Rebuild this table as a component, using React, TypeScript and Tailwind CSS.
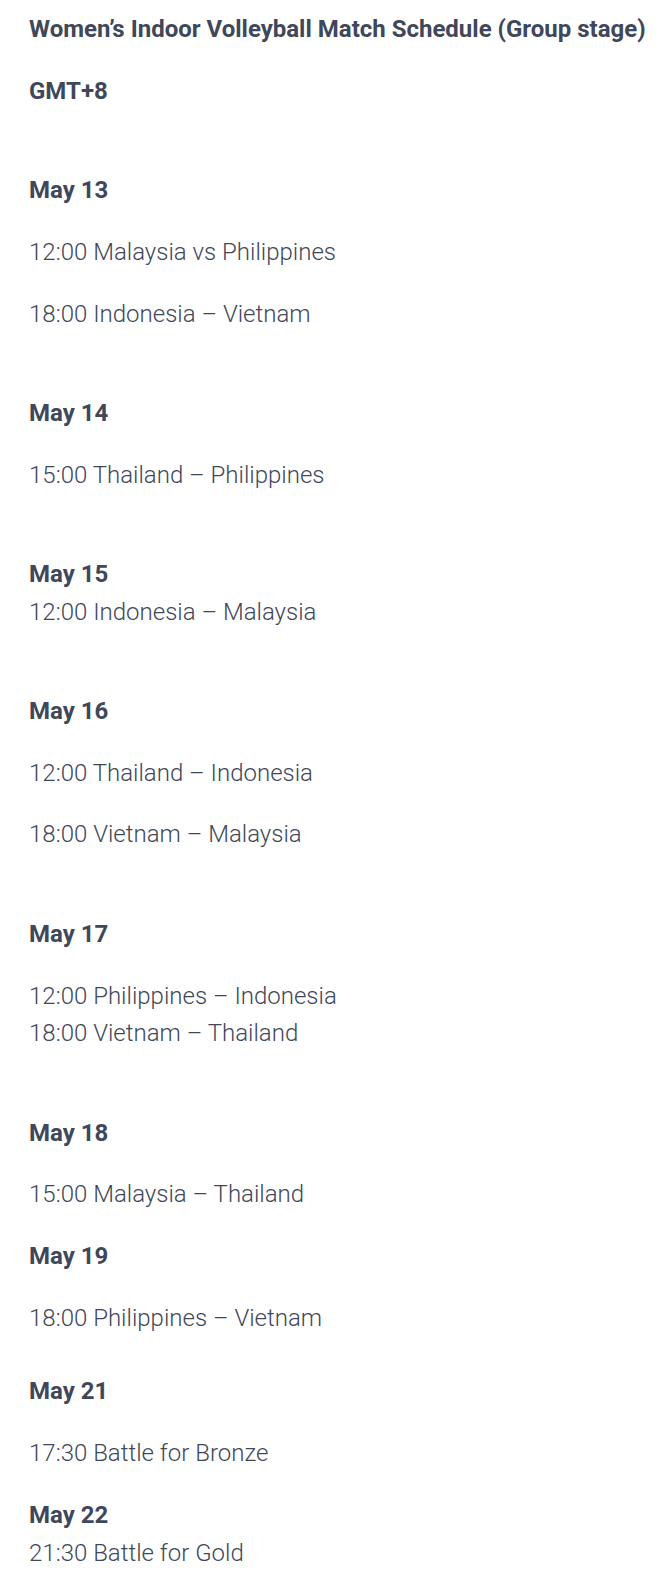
type Block = {
  lines: { text: string; bold?: boolean }[];
  gapBefore?: boolean;
  extra?: boolean;
};

const blocks: Block[] = [
  { lines: [{ text: "Women’s Indoor Volleyball Match Schedule (Group stage)", bold: true }] },
  { lines: [{ text: "GMT+8", bold: true }] },
  { gapBefore: true, lines: [{ text: "May 13", bold: true }] },
  { lines: [{ text: "12:00 Malaysia vs Philippines" }] },
  { lines: [{ text: "18:00 Indonesia – Vietnam" }] },
  { gapBefore: true, lines: [{ text: "May 14", bold: true }] },
  { lines: [{ text: "15:00 Thailand – Philippines" }] },
  {
    gapBefore: true,
    lines: [{ text: "May 15", bold: true }, { text: "12:00 Indonesia – Malaysia" }],
  },
  { gapBefore: true, lines: [{ text: "May 16", bold: true }] },
  { lines: [{ text: "12:00 Thailand – Indonesia" }] },
  { lines: [{ text: "18:00 Vietnam – Malaysia" }] },
  { gapBefore: true, lines: [{ text: "May 17", bold: true }] },
  {
    lines: [{ text: "12:00 Philippines – Indonesia" }, { text: "18:00 Vietnam – Thailand" }],
  },
  { gapBefore: true, lines: [{ text: "May 18", bold: true }] },
  { lines: [{ text: "15:00 Malaysia – Thailand" }] },
  { lines: [{ text: "May 19", bold: true }] },
  { extra: true, lines: [{ text: "18:00 Philippines – Vietnam" }] },
  { lines: [{ text: "May 21", bold: true }] },
  { lines: [{ text: "17:30 Battle for Bronze" }] },
  {
    lines: [{ text: "May 22", bold: true }, { text: "21:30 Battle for Gold" }],
  },
];

const App = () => {
  return (
    <section
      className="min-h-[1590px] bg-white pt-[11px] pl-[29px] pr-[10px] text-[24px] leading-[37.7px] text-[#3f475a]"
      style={{ fontFamily: "Roboto, 'Noto Sans', sans-serif" }}
    >
      {blocks.map((b, i) => (
        <p
          key={i}
          className={`${b.gapBefore ? "pt-[37.7px]" : ""} ${b.extra ? "mb-[36px]" : "mb-6"} whitespace-nowrap`}
        >
          {b.lines.map((l, j) => (
            <span key={j} className={`block ${l.bold ? "font-bold" : "font-light"}`}>
              {l.text}
            </span>
          ))}
        </p>
      ))}
    </section>
  );
};

export default App;
